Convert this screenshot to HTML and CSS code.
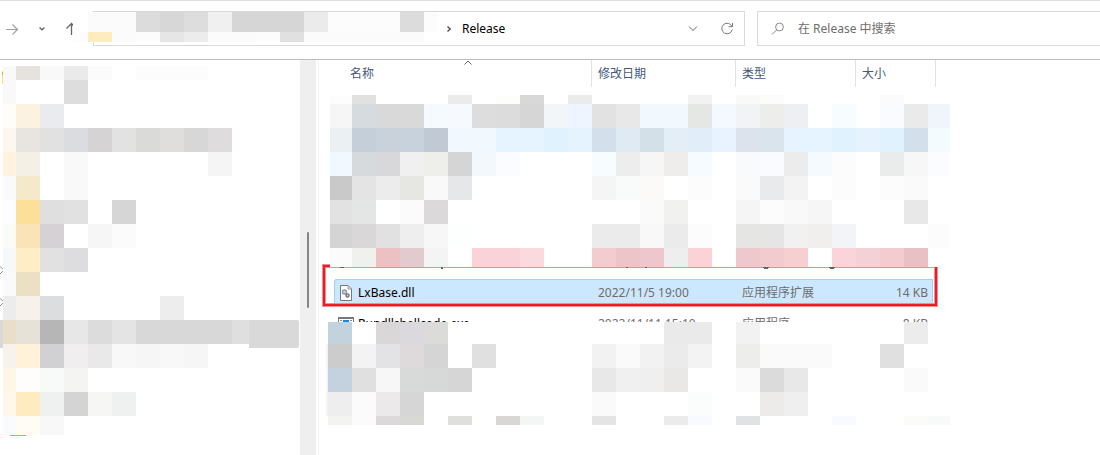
FILE: index.html
```html
<!DOCTYPE html>
<html lang="zh-CN">
<head>
<meta charset="utf-8">
<title>Release</title>
<link rel="stylesheet" href="styles.css">
</head>
<body>
<header class="toolbar">
  <nav class="nav">
    <button class="icon-btn forward" aria-label="前进"><svg width="14" height="14" viewBox="0 0 14 14"><path d="M1 7.500H12.500M7.500 2.500L12.500 7.500L7.500 12.500" stroke="#a0a0a0" stroke-width="1.200"/></svg></button>
    <button class="icon-btn recent" aria-label="最近浏览的位置"><svg width="8" height="6" viewBox="0 0 8 6"><path d="M1.500 1.500L4 3.800L6.500 1.500" stroke="#666" stroke-width="1.300"/></svg></button>
    <button class="icon-btn up" aria-label="向上"><svg width="12" height="14" viewBox="0 0 12 14"><path d="M6.500 13V1.500M1.500 6.500L6.500 1.500L11 6.500" stroke="#666" stroke-width="1.300"/></svg></button>
  </nav>
  <div class="address">
    <svg class="crumb-arrow" width="6" height="8" viewBox="0 0 6 8"><path d="M1.500 1.500L4.200 4L1.500 6.500" stroke="#555" stroke-width="1.500"/></svg>
    <span class="crumb">Release</span>
    <button class="icon-btn history" aria-label="历史"><svg width="10" height="7" viewBox="0 0 10 7"><path d="M1 1.500L5 5.500L9 1.500" stroke="#666"/></svg></button>
    <button class="icon-btn refresh" aria-label="刷新"><svg width="14" height="14" viewBox="0 0 14 14"><path d="M12 4.500A5.300 5.300 0 1 0 12.300 7.500M12.500 1V4.700H8.500" stroke="#777"/></svg></button>
  </div>
  <label class="search">
    <svg width="14" height="14" viewBox="0 0 14 14"><circle cx="8.500" cy="5" r="3.900" stroke="#888"/><path d="M5.700 7.800L1 12.500" stroke="#888"/></svg>
    <input type="text" placeholder="在 Release 中搜索" aria-label="搜索">
  </label>
</header>
<div class="body">
  <aside class="tree"><div class="tree-selected"></div></aside>
  <div class="scrollbar"><div class="thumb"></div></div>
  <main class="files">
    <svg class="sort" width="8" height="6" viewBox="0 0 8 6"><path d="M.5 4.500L4 1L7.500 4.500" stroke="#666"/></svg>
    <table>
      <colgroup><col class="c-name"><col class="c-date"><col class="c-type"><col class="c-size"></colgroup>
      <thead><tr><th>名称</th><th>修改日期</th><th>类型</th><th>大小</th></tr></thead>
      <tbody>
        <tr class="redacted"><td colspan="4"></td></tr>
        <tr class="selected">
          <td><span class="file"><svg width="14" height="16" viewBox="0 0 14 16"><path d="M1.500.5H9L12.500 4V15.500H1.500Z" fill="#fff" stroke="#777"/><path d="M9 .5V4H12.500" stroke="#999"/><circle cx="5.500" cy="7" r="2" fill="#ccd5dd" stroke="#8d979f" stroke-width="1.300"/><circle cx="8.500" cy="10.500" r="1.600" fill="#ccd5dd" stroke="#65717b" stroke-width="1.300"/></svg>LxBase.dll</span></td>
          <td>2022/11/5 19:00</td><td>应用程序扩展</td><td>14 KB</td>
        </tr>
        <tr>
          <td><span class="file"><svg width="16" height="14" viewBox="0 0 16 14"><path d="M.5.5H15.500V13.500H.5Z" fill="#fff" stroke="#777"/><path d="M0 1H16" stroke="#777" stroke-width="2"/><path d="M5 3H11V10H5Z" fill="#1489df"/><path d="M2 3.500H4M12 3.500H14" stroke="#888"/></svg>Rundllshellcode.exe</span></td>
          <td>2022/11/11 15:10</td><td>应用程序</td><td>8 KB</td>
        </tr>
      </tbody>
    </table>
  </main>
</div>
<svg class="overlay" id="overlay" aria-hidden="true">
  <g id="mosaic" shape-rendering="crispEdges"></g>
  <g shape-rendering="crispEdges">
    <path fill="#f08c92" d="M322 264h8v4h-4v35h608v-36h4v40H322zM326 267h608v1H326z"/>
    <path fill="#ed1c24" d="M323 265h7v2h-5v37h610v-37h2v39H323z"/>
    <path fill="#8d4c50" d="M340 267h4v1h-4zM626 267h2v1h-2zM645 267h2v1h-2zM763 267h6v1h-6zM829 267h6v1h-6z"/>
    <path fill="#666" d="M441 267h2v2h-2zM764 268h4v1h-4zM830 268h4v1h-4z"/>
    <path fill="#fbdc82" d="M2 71h1v13h-1z"/><path fill="#edac16" d="M2 72h1v3h-1z"/>
    <path fill="#e3a536" d="M10 435h16v1H10z"/>
  </g>
  <path fill="none" stroke="#999" d="M0 266.500L3 269M0 274L3 271M0 298.500L3 301M0 306L3 303"/>
</svg>
<script src="mosaic.js"></script>
</body>
</html>
```
FILE: styles.css
```css
* { box-sizing: border-box; }
body {
  margin: 0;
  position: relative;
  min-height: 100vh;
  display: flex;
  flex-direction: column;
  overflow: hidden;
  background: #fff;
  color: #000;
  font: 12px/16px "Noto Sans", "Noto Sans CJK SC", sans-serif;
}
svg { fill: none; flex: none; }
.icon-btn {
  display: flex;
  padding: 0;
  border: 0;
  background: none;
}
.toolbar {
  display: grid;
  grid-template-columns: 81px 652fr 343fr;
  gap: 12px;
  height: 60px;
  padding-top: 10px;
  border-top: 1px solid #e1dbe2;
  border-bottom: 1px solid #bebebe;
}
.nav {
  display: flex;
  align-items: center;
  gap: 19px;
  height: 35px;
  padding-left: 5px;
}
.address, .search {
  display: flex;
  align-items: center;
  min-width: 0;
  height: 35px;
  border: 1px solid #d9d9d9;
}
.address { padding: 0 10px 0 352px; }
.crumb { margin-left: 10px; }
.history { margin-left: auto; }
.refresh { margin-left: 22px; }
.search {
  border-right: 0;
  padding-left: 13px;
  gap: 13px;
}
.search input {
  flex: 1;
  min-width: 0;
  padding: 0;
  border: 0;
  outline: 0;
  background: none;
  color: #6d6d6d;
  font: inherit;
}
.search input::placeholder { color: #6d6d6d; opacity: 1; }
.body { display: flex; flex: 1; }
.tree { width: 300px; padding: 260px 1px 0 0; }
.tree-selected { height: 28px; background: #d9d9d9; border-radius: 0 2px 2px 0; }
.scrollbar { width: 16px; padding: 172px 7px 0; background: #efefef; }
.thumb { height: 76px; border-radius: 1px; background: #858585; }
.files {
  position: relative;
  flex: 1;
  margin-left: 2px;
  padding-left: 15px;
  border-left: 1px solid #f4f4f4;
}
.sort { position: absolute; left: 145px; top: 0; }
table { width: 602px; table-layout: fixed; border-spacing: 0; }
.c-name { width: 258px; }
.c-date { width: 144px; }
.c-type { width: 120px; }
.c-size { width: 80px; }
th {
  height: 27px;
  padding: 0 0 0 6px;
  border-right: 1px solid #e2e2e2;
  color: #44597a;
  font-weight: 400;
  text-align: left;
}
th:first-child { padding-left: 16px; }
td {
  height: 31px;
  padding: 2px 0 0 6px;
  border-bottom: 5px solid transparent;
  background-clip: padding-box;
  color: #6d6d6d;
  white-space: nowrap;
}
td:first-child { padding-left: 4px; color: #000; }
td:last-child { border-right: 3px solid transparent; padding-right: 5px; text-align: right; }
.file { display: flex; align-items: center; }
.file svg { width: 16px; margin-right: 4px; }
.redacted td { height: 192px; }
.selected td { background-color: #cce8ff; box-shadow: inset 0 1px #99d1ff; }
.selected td:first-child { border-radius: 2px 0 0 0; box-shadow: inset 1px 1px #99d1ff; }
.selected td:last-child { box-shadow: inset -1px 1px #99d1ff; }
.overlay {
  position: absolute;
  left: 0;
  top: 0;
  width: 100%;
  height: 100%;
  pointer-events: none;
}
```
FILE: mosaic.js
```javascript
// Each block hides private text: edges of its area, then rows of cell colours on a 24px grid.
// "-" is a blank cell; "xN" repeats the colour before it.
const blocks = [
  { left: 73, first: 88, right: 438, rows: [
    [12, 20, "- fbfbfb x2 dcdcdc d7d7d7 dddddd f0f0f0 d6d6d6 x3 ebebeb fcfcfc x3 dcdcdc fcfcfc"],
    [32, 10, "fcfcfc feecbf fbfbfb fcfcfc e6e6e6 ececec fbfbfb x2 fcfcfc e0e0e0 fbfbfb x5"]] },
  { left: 3, first: 16, right: 249, rows: [
    [66, 14, "f9f9f9 e6e3df f9f9f9 eaeaea fbfbfb - fcfcfc x3"],
    [80, 24, "f9f9f9 - - dddddd"],
    [104, 24, "fefdf8 fbf3df e9ebee"],
    [128, 24, "fdf7f0 e8e4df e1e1e1 dbdce0 d6d3d4 e2e2e2 dadbd8 dfdedc d7d7d7 dfdcde"],
    [152, 24, "fff3df f5f0e5 - f9f9f9 - - - - - f5f5f5"],
    [176, 24, "fafafa f5e9cb - f9f9f9"],
    [200, 24, "fdfdfd fcdf98 dfdfdf e1e1e1 - d6d6d6"],
    [224, 24, "fcfcf7 fae4b7 d4d2d5 - f6f6f6 fbfbfb"],
    [248, 24, "f7f8f9 ffeec5 e1e1e1 dddde0"],
    [272, 24, "fafafa ebe0c3"],
    [296, 24, "ececec f7f1eb dbdddf - - - - ededed"],
    [320, 24, "e8dfc6 e6e2d8 b6b6b6 e7e7e7 dcdcdc e4e4e4 d8d8d8 x4 dfdfdf"],
    [344, 24, "f6f3ed fff2d8 d1d1d3 f1eef0 e9e9e9 f8f8f8 f6f6f6 f8f8f8 f6f6f6 - -"],
    [368, 24, "fff7e6 fffdfb f8f9f9 f4f4f2"],
    [392, 24, "fff8e9 feebbf eff0f0 d4d4d4 f6f6f4 eff1f1"],
    [416, 19, "fafbfd fffcf4 f8f8f8"]] },
  { left: 330, first: 352, right: 950, rows: [
    [95, 9, "fdfdfd e1e1df - - - ebebeb - fdfdfb d8d8d8 - ebebeb - - - - f2f2f2 - f9f9f7 fcfcfc - - - - fbfbfb - -"],
    [104, 24, "f6f6f6 d6dbdf d9d9d9 x2 f4faff f6faff dddddd dcdcdc d6d6d6 f3f6f9 eef5ff e2e2e2 e8e8e8 f1f9ff x2 e5e7e5 f4f9ff f1f3f5 ededec eeeff2 - f6fcff - f9fbff eaeaea eff5fa"],
    [128, 24, "ebf0f3 c5cfda c9d1da c8d2dd c0c9d4 f1f9ff x2 e5f4ff x2 e1f2ff e5f3ff d3dfea dfeaf3 d3e0e8 e4eef7 e1edf9 e8f3ff dce3ed dae4ec e7f3ff e6f4ff e1f2ff e6f3ff e1f2ff d3dfea f4fbff"],
    [152, 24, "f2f8ff d7dadc d8d8da f0f0f0 eeeeeb d5d5d5 f3f8fc fbfcff - - - f7fcff ededed f6f6f6 efedeb f6fbff - f8fafc fafbff ececec f5faff fcfcfc - eaeceb f7f7f7 fbfcff"],
    [176, 24, "c9c9c9 e4e4e4 ececec e6e6e3 f9f9f9 e5e7e9 - - - - - f5f5f5 f8fbfa fbfaf8 - fcfcfc - fafafa e8eaec f3f3f3 - fcfcfc - fcfcfc fafafa -"],
    [200, 24, "e2e2e2 e3e6e4 - fbfbfb dcd9db - - - - - - - - fafafa f1f1ef - - f5f5f5 fcfcfc f9f9f9 f6f6f6 - - - e8e8e8 -"],
    [224, 24, "d4d4d4 dad7d8 e1e1e1 eeeeee f7f7f7 fcfffe - - - - - ebebeb x2 f8f8f8 ebebec fcfcfc - e5e5e3 e5e5e5 f1f1f1 f0efed f2f4f7 - - - fcfcfc"],
    [248, 19, "fbfbfb f0f0ef ebc1c4 e1cbce f4f4f4 - f9d3d7 x2 fadadd - - f3cccf edc4c7 edc7cb eeeeee fbd3d7 - edc8cd f2cbce f6cfd1 - fad4d8 f3d1d6 f4cbce e9c0c3 -"]] },
  { left: 328, first: 352, right: 950, rows: [
    [322, 22, "c3d3de - dad7d9 dbd9dd dbdbd9 - - - - - - - - - eaeaea x2 - f2f2f2 - - - - - - ececec -"],
    [344, 24, "cccccc f3f3f3 e3e3e6 dedadc d5d5d5 - e0e0e0 - - - - f2f2f2 fafafa f2f2f2 ebebeb f3f3f3 - ededeb fafafa fafafa f9faf9 - - e0e0e0 - -"],
    [368, 24, "c4d2df e0e0e0 f7f7f7 d8d9d9 d6d9d8 d6d6d6 - - - - - e8e8e8 f0f0f0 efefef eae8e6 - - fafafa dbdbdb e8e8e8 - - - - fafafa -"],
    [392, 24, "eeeeee fbfbfb ece9ea d6d6d6 - - - - - - - fafafa - - - fbfdfc - - ecebe9 efefef - - - - - -"],
    [416, 9, "f3f3f1 fbfbfb dcd9da d8d8d5 - dfdfdd - d9d7d5 f3f6f5 - - e4e4e4 - - ebebeb f8faff - e0e2e4 - - - f8faff - - fbfbf9 f8faf9"]] }
];

const layer = document.getElementById("mosaic");
function cell(x, y, width, height, fill) {
  const rect = document.createElementNS("http://www.w3.org/2000/svg", "rect");
  for (const [key, value] of Object.entries({ x, y, width, height, fill })) rect.setAttribute(key, value);
  layer.append(rect);
}
for (const { left, first, right, rows } of blocks) {
  for (const [y, height, text] of rows) {
    const colours = [];
    for (const token of text.split(" ")) {
      if (token[0] === "x") for (let n = 1; n < +token.slice(1); n++) colours.push(colours.at(-1));
      else colours.push(token);
    }
    colours.forEach((colour, i) => {
      const x = i ? first + 24 * (i - 1) : left;
      const end = Math.min(first + 24 * i, right);
      if (end > x) cell(x, y, end - x, height, colour === "-" ? "#fff" : "#" + colour);
    });
  }
}
cell(326, 344, 2, 72, "#f3f3f3");
```
